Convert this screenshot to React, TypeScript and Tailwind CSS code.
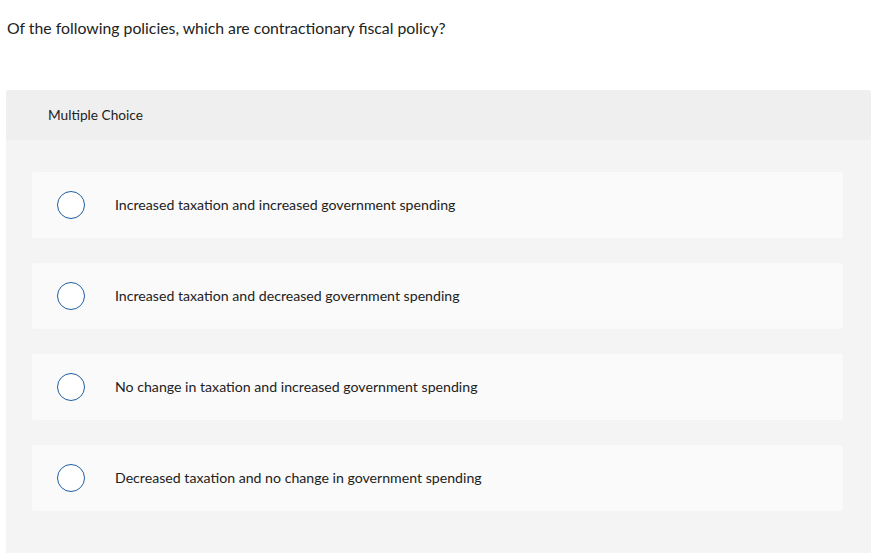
import React from 'react';

const choices = [
  'Increased taxation and increased government spending',
  'Increased taxation and decreased government spending',
  'No change in taxation and increased government spending',
  'Decreased taxation and no change in government spending',
];

export default function App() {
  return (
    <div className="min-h-[553px] bg-white text-[#222] font-['Lato','Open_Sans',sans-serif]">
      <div className="pl-[7px] pt-[17px] text-[15.8px] leading-[22px]">
        Of the following policies, which are contractionary fiscal policy?
      </div>

      <div className="mx-[6px] mt-[51px] w-[865px] rounded-t-[3px] bg-[#f4f4f4]">
        <div className="h-[50px] rounded-t-[3px] bg-[#efefef] pl-[42px] pt-[1px] flex items-center text-[13.7px]">
          Multiple Choice
        </div>
        <div className="px-[26px] pt-[32px] pb-[42px] flex flex-col gap-[25px]">
          {choices.map((c) => (
            <div key={c} className="h-[66px] w-[811px] rounded-[3px] bg-[#fafafa] flex items-center">
              <span className="ml-[25px] h-[28px] w-[28px] rounded-full border-[1.5px] border-[#1f5e9f] bg-white" />
              <span className="ml-[30px] text-[14.15px] text-[#222]">{c}</span>
            </div>
          ))}
        </div>
      </div>
    </div>
  );
}
